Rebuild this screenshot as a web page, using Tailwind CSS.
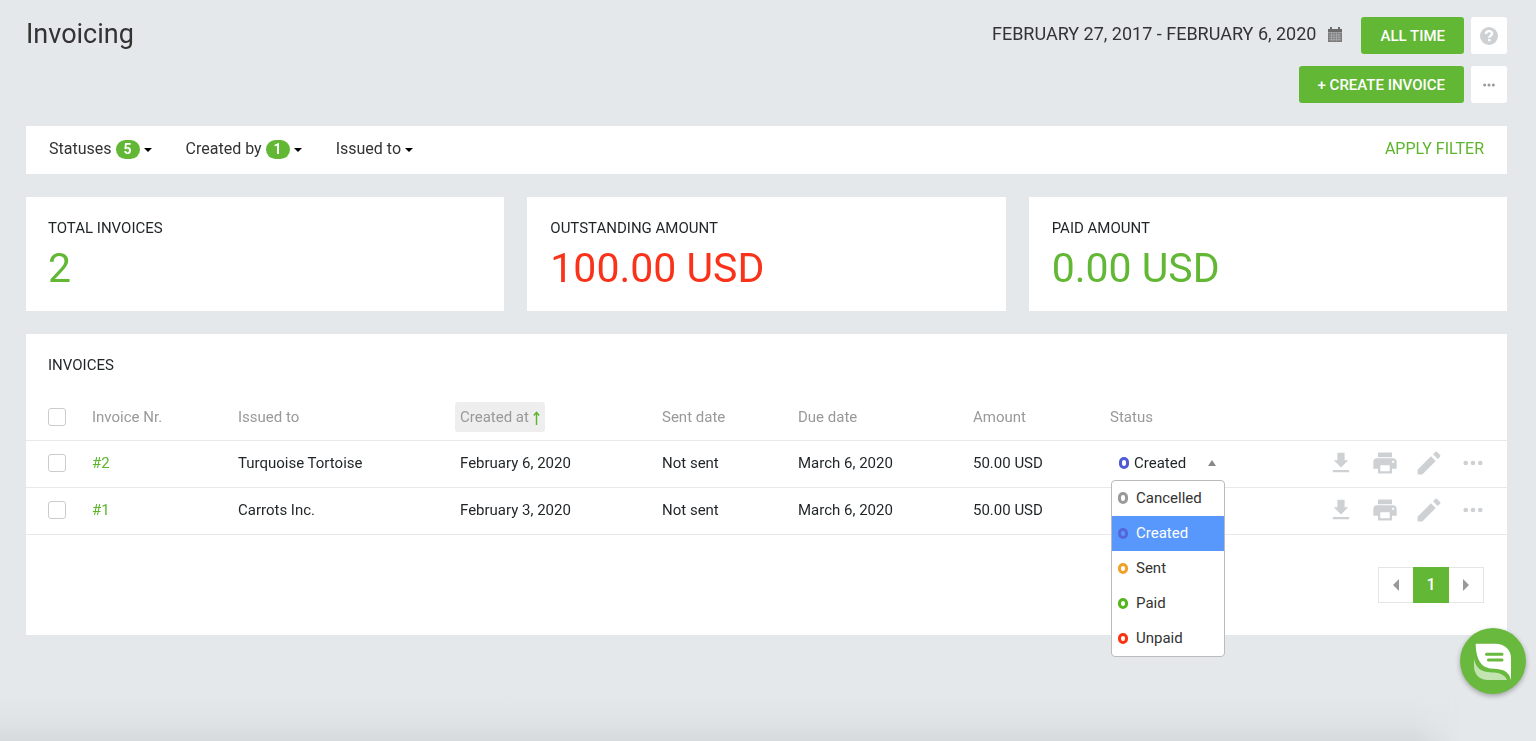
<!DOCTYPE html>
<html lang="en">
<head>
  <meta charset="UTF-8" />
  <meta name="viewport" content="width=device-width, initial-scale=1.0"/>
  <title>Invoicing</title>
  <script src="https://cdn.jsdelivr.net/npm/@tailwindcss/browser@4"></script>
</head>
<body class="min-h-screen bg-[#e4e8eb] font-['Roboto',sans-serif] text-[15px] leading-5 text-[#1f2427]">
  <!-- icons shared by the table rows -->
  <svg class="hidden" aria-hidden="true">
    <symbol id="icon-download" viewBox="0 0 24 24"><path d="M18.2 9.6h-3.1V3.2H8.9v6.4H5.8l6.2 6.3zM5 17.9h14v2H5z"/></symbol>
    <symbol id="icon-print" viewBox="0 0 24 24"><path d="M19 8H5c-1.66 0-3 1.34-3 3v6h4v4h12v-4h4v-6c0-1.66-1.34-3-3-3zm-3 11H8v-5h8v5zm3-7c-.55 0-1-.45-1-1s.45-1 1-1 1 .45 1 1-.45 1-1 1zm-1-9H6v4h12V3z"/></symbol>
    <symbol id="icon-edit" viewBox="1 1 22 22"><path d="M3 17.25V21h3.75L17.3 10.45 13.55 6.7 3 17.25zM20.71 7.04c.39-.39.39-1.02 0-1.41l-2.34-2.34c-.39-.39-1.02-.39-1.41 0l-1.83 1.83 3.75 3.75 1.83-1.83z"/></symbol>
    <symbol id="icon-more" viewBox="0 0 24 24"><circle cx="5.8" cy="12" r="2"/><circle cx="12" cy="12" r="2"/><circle cx="18.2" cy="12" r="2"/></symbol>
    <symbol id="icon-caret" viewBox="0 0 8 4"><path d="M0 0h8L4 4z"/></symbol>
  </svg>

  <!-- soft shade along the bottom edge -->
  <div class="pointer-events-none fixed bottom-0 left-0 -z-10 h-12 w-[95%] bg-linear-to-t from-[#d6dadd] via-[#dfe3e6] via-40% to-[#e4e8eb] mask-r-from-97% mask-r-to-100%"></div>

  <main class="pl-[26px] pr-[29px] pt-[17px] pb-8">
    <header class="flex items-start justify-between">
      <h1 class="text-[27px] leading-[34px] text-[#333]">Invoicing</h1>
      <div class="flex flex-col items-end gap-3">
        <div class="flex items-start gap-[7px]">
          <button type="button" class="mr-3 flex items-center gap-3 text-lg leading-[34px] text-[#333]">
            FEBRUARY 27, 2017 - FEBRUARY 6, 2020
            <svg class="h-[15px] w-[14px]" viewBox="0 0 14 15" aria-hidden="true">
              <path d="M0 2h2V0h2v2h6V0h2v2h2v3H0z" fill="#6b6b6b"/>
              <path d="M0 5h14v10H0z" fill="#7d7d7d"/>
              <path d="M0 5.5h14M1 8h12M1 10.3h12M1 12.6h12M3.5 6v8M6 6v8M8.5 6v8M11 6v8" stroke="#b5b8ba" stroke-width=".6"/>
            </svg>
          </button>
          <button type="button" class="h-[37px] rounded-[3px] bg-[#62b735] px-[19px] font-medium text-white">ALL TIME</button>
          <button type="button" aria-label="Help" class="grid h-[37px] w-9 place-items-center rounded-[3px] bg-white">
            <svg class="size-[18px]" viewBox="0 0 16 16" aria-hidden="true">
              <circle cx="8" cy="8" r="8" fill="#cdd1d4"/>
              <path d="M5.3 6.3C5.3 4.6 6.4 3.7 8 3.7s2.700.9 2.700 2.300c0 1.600-2.500 1.700-2.500 3.500" fill="none" stroke="#fff" stroke-width="2.100"/>
              <path d="M7.100 10.700h2.200v2h-2.200z" fill="#fff"/>
            </svg>
          </button>
        </div>
        <div class="flex items-center gap-[7px]">
          <button type="button" class="h-[37px] rounded-[3px] bg-[#62b735] px-[19px] font-medium text-white">+ CREATE INVOICE</button>
          <button type="button" aria-label="More actions" class="grid h-[37px] w-9 place-items-center rounded-[3px] bg-white">
            <svg class="h-1 w-3" viewBox="0 0 12 4" fill="#9a9a9a" aria-hidden="true"><circle cx="1.700" cy="2" r="1.500"/><circle cx="6" cy="2" r="1.500"/><circle cx="10.300" cy="2" r="1.500"/></svg>
          </button>
        </div>
      </div>
    </header>

    <section class="mt-[23px] flex h-12 items-center justify-between bg-white px-[23px] pb-0.5 text-base text-[#333]" aria-label="Filters">
      <div class="flex items-center gap-[34px]">
        <button type="button" class="flex items-center gap-1">
          Statuses
          <span class="rounded-full bg-[#62b735] px-2 text-sm leading-[19px] font-bold text-white">5</span>
          <svg class="mt-0.5 h-1 w-2" aria-hidden="true"><use href="#icon-caret"/></svg>
        </button>
        <button type="button" class="flex items-center gap-1">
          Created by
          <span class="rounded-full bg-[#62b735] px-2 text-sm leading-[19px] font-bold text-white">1</span>
          <svg class="mt-0.5 h-1 w-2" aria-hidden="true"><use href="#icon-caret"/></svg>
        </button>
        <button type="button" class="flex items-center gap-1">
          Issued to
          <svg class="mt-0.5 h-1 w-2" aria-hidden="true"><use href="#icon-caret"/></svg>
        </button>
      </div>
      <button type="button" class="text-[#5db52c]">APPLY FILTER</button>
    </section>

    <section class="mt-[23px] grid grid-cols-3 gap-[23px]" aria-label="Totals">
      <div class="bg-white px-[22px] pt-[21px] pb-[19px]">
        <h2>TOTAL INVOICES</h2>
        <p class="mt-1.5 text-[41px] leading-12 text-[#62b735]">2</p>
      </div>
      <div class="bg-white px-[23px] pt-[21px] pb-[19px]">
        <h2>OUTSTANDING AMOUNT</h2>
        <p class="mt-1.5 text-[41px] leading-12 text-[#fa3219]">100.00 USD</p>
      </div>
      <div class="bg-white px-[23px] pt-[21px] pb-[19px]">
        <h2>PAID AMOUNT</h2>
        <p class="mt-1.5 text-[41px] leading-12 text-[#62b735]">0.00 USD</p>
      </div>
    </section>

    <section class="mt-[23px] bg-white pt-[21px] pb-8">
      <h2 class="px-[22px]">INVOICES</h2>
      <table class="mt-[19px] w-full table-fixed text-left">
        <thead>
          <tr class="h-[46px] border-b border-[#e6e9ec] text-[#999]">
            <th class="w-[66px] pl-[22px]"><input type="checkbox" aria-label="Select all invoices" class="block size-[18px] appearance-none rounded-[3px] border border-[#ccc] bg-white" /></th>
            <th class="w-[146px] font-normal">Invoice Nr.</th>
            <th class="w-[222px] font-normal">Issued to</th>
            <th class="w-[202px] font-normal"><button type="button" class="-ml-[5px] h-[30px] rounded-[3px] bg-[#eee] px-[5px]">Created at <svg class="inline h-[14px] w-[7px]" viewBox="0 0 7 14" fill="none" stroke="#5db52c" stroke-width="1.400" aria-hidden="true"><path d="M3.500 14V1.500M.8 4.500 3.500 1.300l2.700 3.200"/></svg></button></th>
            <th class="w-[136px] font-normal">Sent date</th>
            <th class="w-[175px] font-normal">Due date</th>
            <th class="w-[137px] font-normal">Amount</th>
            <th class="w-[120px] font-normal">Status</th>
            <th class="w-[277px]" aria-label="Actions"></th>
          </tr>
        </thead>
        <tbody>
          <tr class="h-[47px] border-b border-[#e6e9ec]">
            <td class="pb-0.5 pl-[22px]"><input type="checkbox" aria-label="Select invoice 2" class="block size-[18px] appearance-none rounded-[3px] border border-[#ccc] bg-white" /></td>
            <td class="pb-0.5"><a href="#" class="text-[#5db52c]">#2</a></td>
            <td class="pb-0.5">Turquoise Tortoise</td>
            <td class="pb-0.5">February 6, 2020</td>
            <td class="pb-0.5">Not sent</td>
            <td class="pb-0.5">March 6, 2020</td>
            <td class="pb-0.5">50.00 USD</td>
            <td class="relative pb-0.5">
              <button type="button" aria-haspopup="listbox" aria-expanded="true" class="flex w-[114px] items-center gap-[5px] pr-2 pl-[9px]">
                <span class="h-3 w-[10px] rounded-[5px] border-3 border-[#4f5bd5]"></span>
                Created
                <svg class="ml-auto h-[6px] w-2" viewBox="0 0 8 6" fill="#888" aria-hidden="true"><path d="M0 6h8L4 0z"/></svg>
              </button>
              <ul role="listbox" aria-label="Status" class="absolute top-[39px] left-px z-10 w-[114px] rounded-[4px] border border-[#bbb] bg-white leading-[35px] text-[#333]">
                <li role="option" class="flex items-center gap-2 pl-[6px]"><span class="h-3 w-[10px] rounded-[5px] border-3 border-[#999]"></span>Cancelled</li>
                <li role="option" aria-selected="true" class="flex items-center gap-2 bg-[#5897fb] pl-[6px] text-white"><span class="h-[11px] w-[10px] rounded-[5px] border-3 border-[#5567d8]"></span>Created</li>
                <li role="option" class="flex items-center gap-2 pl-[6px]"><span class="h-[11px] w-[10px] rounded-[5px] border-3 border-[#f0a12c]"></span>Sent</li>
                <li role="option" class="flex items-center gap-2 pl-[6px]"><span class="h-[11px] w-[10px] rounded-[5px] border-3 border-[#55b51c]"></span>Paid</li>
                <li role="option" class="flex items-center gap-2 pl-[6px]"><span class="h-[11px] w-[10px] rounded-[5px] border-3 border-[#fa3210]"></span>Unpaid</li>
              </ul>
            </td>
            <td class="pr-5 pb-0.5">
              <div class="flex justify-end gap-4 text-[#cdd1d4]">
                <button type="button" aria-label="Download"><svg class="size-7" fill="currentColor"><use href="#icon-download"/></svg></button>
                <button type="button" aria-label="Print"><svg class="size-7" fill="currentColor"><use href="#icon-print"/></svg></button>
                <button type="button" aria-label="Edit"><svg class="size-7" fill="currentColor"><use href="#icon-edit"/></svg></button>
                <button type="button" aria-label="More"><svg class="size-7" fill="currentColor"><use href="#icon-more"/></svg></button>
              </div>
            </td>
          </tr>
          <tr class="h-[47px] border-b border-[#e6e9ec]">
            <td class="pb-0.5 pl-[22px]"><input type="checkbox" aria-label="Select invoice 1" class="block size-[18px] appearance-none rounded-[3px] border border-[#ccc] bg-white" /></td>
            <td class="pb-0.5"><a href="#" class="text-[#5db52c]">#1</a></td>
            <td class="pb-0.5">Carrots Inc.</td>
            <td class="pb-0.5">February 3, 2020</td>
            <td class="pb-0.5">Not sent</td>
            <td class="pb-0.5">March 6, 2020</td>
            <td class="pb-0.5">50.00 USD</td>
            <td></td>
            <td class="pr-5 pb-0.5">
              <div class="flex justify-end gap-4 text-[#cdd1d4]">
                <button type="button" aria-label="Download"><svg class="size-7" fill="currentColor"><use href="#icon-download"/></svg></button>
                <button type="button" aria-label="Print"><svg class="size-7" fill="currentColor"><use href="#icon-print"/></svg></button>
                <button type="button" aria-label="Edit"><svg class="size-7" fill="currentColor"><use href="#icon-edit"/></svg></button>
                <button type="button" aria-label="More"><svg class="size-7" fill="currentColor"><use href="#icon-more"/></svg></button>
              </div>
            </td>
          </tr>
        </tbody>
      </table>
      <nav class="mt-8 flex justify-end px-[23px]" aria-label="Pagination">
        <button type="button" aria-label="Previous page" class="grid h-9 w-[35px] place-items-center border border-r-0 border-[#e3e5e7]">
          <svg class="h-[12px] w-[6px]" viewBox="0 0 6 12" fill="#999"><path d="M6 0v12L0 6z"/></svg>
        </button>
        <button type="button" aria-current="page" class="h-9 w-9 bg-[#62b735] text-base font-medium text-white">1</button>
        <button type="button" aria-label="Next page" class="grid h-9 w-[35px] place-items-center border border-l-0 border-[#e3e5e7]">
          <svg class="h-[12px] w-[6px]" viewBox="0 0 6 12" fill="#999"><path d="M0 0v12l6-6z"/></svg>
        </button>
      </nav>
    </section>
  </main>

  <!-- chat launcher -->
  <button type="button" aria-label="Open chat" class="fixed right-[10px] bottom-[47px] grid size-[66px] place-items-center rounded-full bg-[#68b93d] shadow-[0_2px_5px_rgba(0,0,0,0.3)]">
    <svg class="size-10" viewBox="0 0 40 40" aria-hidden="true">
      <path d="M1 17c.5 5 3 10 8 12.500 5 2.300 11 1.500 16 2.500 4 1 7.500 3 9 7H14C5 38.500 1 32 1 25z" fill="#c3e4b1"/>
      <path d="M2.700 2.700H22c9.500 0 16 6 16 14V39c-1.500-6-4.500-9-10-10.300-5-1.200-10-.2-15-2.400C6 23.200 2.700 14 2.700 2.700z" fill="#68b93d" stroke="#68b93d" stroke-width="2"/>
      <path d="M2.700 2.700H22c9.500 0 16 6 16 14V39c-1.500-6-4.500-9-10-10.300-5-1.200-10-.2-15-2.400C6 23.200 2.700 14 2.700 2.700z" fill="#fff"/>
      <path d="M13.500 13.300h15.500M15.500 19h13.500" stroke="#68b93d" stroke-width="3" stroke-linecap="round"/>
    </svg>
  </button>
</body>
</html>
